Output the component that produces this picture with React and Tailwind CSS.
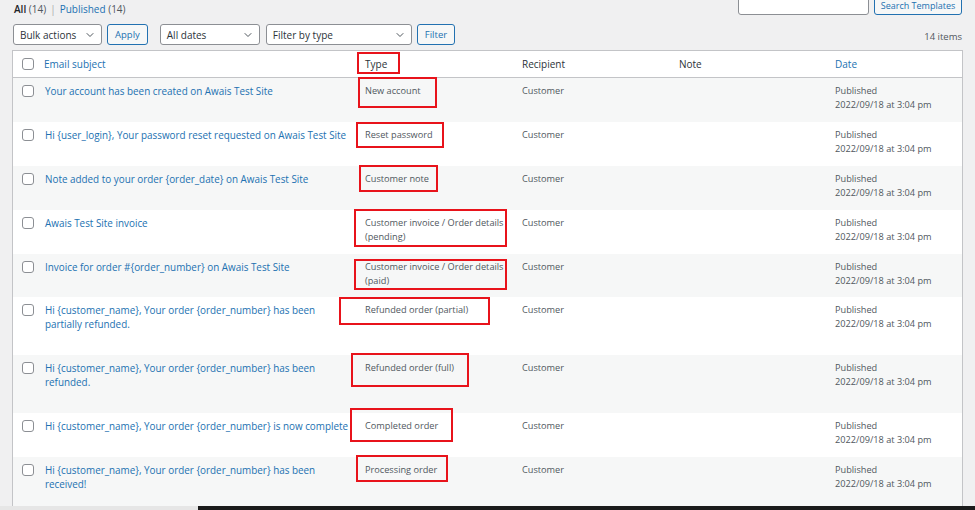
import React from 'react'
import { ChevronDown } from 'lucide-react'

const rows = [
  { subject: ['Your account has been created on Awais Test Site'], type: ['New account'], h: 'h-[44px]' },
  { subject: ['Hi {user_login}, Your password reset requested on Awais Test Site'], type: ['Reset password'], h: 'h-[44px]' },
  { subject: ['Note added to your order {order_date} on Awais Test Site'], type: ['Customer note'], h: 'h-[44px]' },
  { subject: ['Awais Test Site invoice'], type: ['Customer invoice / Order details', '(pending)'], h: 'h-[44px]' },
  { subject: ['Invoice for order #{order_number} on Awais Test Site'], type: ['Customer invoice / Order details', '(paid)'], h: 'h-[43px]' },
  { subject: ['Hi {customer_name}, Your order {order_number} has been', 'partially refunded.'], type: ['Refunded order (partial)'], h: 'h-[58px]' },
  { subject: ['Hi {customer_name}, Your order {order_number} has been', 'refunded.'], type: ['Refunded order (full)'], h: 'h-[58px]' },
  { subject: ['Hi {customer_name}, Your order {order_number} is now complete'], type: ['Completed order'], h: 'h-[44px]' },
  { subject: ['Hi {customer_name}, Your order {order_number} has been', 'received!'], type: ['Processing order'], h: 'h-[49px]' },
]

// red annotation boxes drawn over the screenshot
const marks = [
  'left-[357px] top-[52px] w-[43px] h-[22px]',
  'left-[358px] top-[77px] w-[79px] h-[31px]',
  'left-[356px] top-[122px] w-[88px] h-[26px]',
  'left-[359px] top-[165px] w-[79px] h-[27px]',
  'left-[354px] top-[209px] w-[153px] h-[38px]',
  'left-[354px] top-[259px] w-[153px] h-[31px]',
  'left-[339px] top-[297px] w-[151px] h-[28px]',
  'left-[351px] top-[353px] w-[118px] h-[34px]',
  'left-[350px] top-[408px] w-[103px] h-[34px]',
  'left-[356px] top-[455px] w-[92px] h-[27px]',
]

const Select = ({ label, w }) => (
  <div className={`${w} h-[21px] bg-white border border-[#8c8f94] rounded-[3px] flex items-center justify-between pl-[6px] pr-[5px] text-[#2c3338]`}>
    <span>{label}</span>
    <ChevronDown size={12} strokeWidth={2} className="text-[#50575e]" />
  </div>
)

const Btn = ({ children }) => (
  <button className="h-[21px] px-[7px] bg-[#f6f7f7] border border-[#2271b1] rounded-[3px] text-[#2271b1] text-[9.5px]">{children}</button>
)

const Check = () => (
  <span className="block w-[12px] h-[12px] bg-white border border-[#8c8f94] rounded-[3px]" />
)

export default function App() {
  return (
    <div className="relative w-[975px] h-[510px] overflow-hidden bg-[#f0f0f1] text-[10px] leading-[14px] font-['Open_Sans',sans-serif]">
      <div className="flex items-start justify-between pl-[14px] pr-[13px] h-[18px]">
        <div className="pt-[2px]">
          <span className="font-semibold text-[#1d2327]">All</span> <span className="text-[#50575e]">(14)</span>
          <span className="text-[#a7aaad] mx-[4px]">|</span>
          <span className="text-[#2271b1]">Published <span className="text-[#50575e]">(14)</span></span>
        </div>
        <div className="flex gap-[5px] -mt-[9px]">
          <div className="w-[131px] h-[24px] bg-white border border-[#8c8f94] rounded-[3px]" />
          <button className="w-[88px] h-[24px] flex items-end justify-center pb-[3px] leading-[10px] bg-[#f6f7f7] border border-[#2271b1] rounded-[3px] text-[#2271b1] text-[9px]">Search Templates</button>
        </div>
      </div>

      <div className="flex items-center justify-between pl-[13px] pr-[13px] mt-[6px] h-[21px]">
        <div className="flex items-center">
          <Select label="Bulk actions" w="w-[89px]" />
          <div className="ml-[5px]"><Btn>Apply</Btn></div>
          <div className="ml-[12px]"><Select label="All dates" w="w-[100px]" /></div>
          <div className="ml-[6px]"><Select label="Filter by type" w="w-[146px]" /></div>
          <div className="ml-[5px]"><Btn>Filter</Btn></div>
        </div>
        <span className="text-[#50575e] text-[9.5px] pt-[4px]">14 items</span>
      </div>

      <div className="ml-[12px] mr-[12px] mt-[5px] bg-white border-x border-t border-[#c3c4c7]">
        <div className="flex items-center h-[27px] border-b border-[#c3c4c7]">
          <div className="w-[24px] pl-[9px]"><Check /></div>
          <div className="w-[320px] pl-[7px] text-[#2271b1]">Email subject</div>
          <div className="w-[157px] pl-[8px] text-[#2c3338]">Type</div>
          <div className="w-[157px] pl-[8px] text-[#2c3338]">Recipient</div>
          <div className="w-[156px] pl-[8px] text-[#2c3338]">Note</div>
          <div className="flex-1 pl-[8px] text-[#2271b1]">Date</div>
        </div>
        {rows.map((r, i) => (
          <div key={i} className={`flex items-start pt-[6px] ${r.h} ${i % 2 === 0 ? 'bg-[#f6f7f7]' : 'bg-white'}`}>
            <div className="w-[24px] pl-[9px] pt-[1px]"><Check /></div>
            <div className="w-[320px] pl-[8px] text-[#2271b1] text-[9.9px] whitespace-nowrap">
              {r.subject.map((s, j) => <div key={j}>{s}</div>)}
            </div>
            <div className="w-[157px] pl-[8px] text-[#50575e] text-[9.2px] whitespace-nowrap">
              {r.type.map((s, j) => <div key={j}>{s}</div>)}
            </div>
            <div className="w-[157px] pl-[8px] text-[#50575e] text-[9.2px]">Customer</div>
            <div className="w-[156px] pl-[8px]" />
            <div className="flex-1 pl-[8px] text-[#50575e] text-[9.2px]">
              <div>Published</div>
              <div>2022/09/18 at 3:04 pm</div>
            </div>
          </div>
        ))}
      </div>

      <div className="flex h-[5px]">
        <div className="w-[198px] bg-[#e6e6e6]" />
        <div className="flex-1 bg-[#1b1b1b]" />
      </div>

      {marks.map((m, i) => (
        <div key={i} className={`absolute ${m} border-2 border-[#e8131b]`} />
      ))}
    </div>
  )
}
